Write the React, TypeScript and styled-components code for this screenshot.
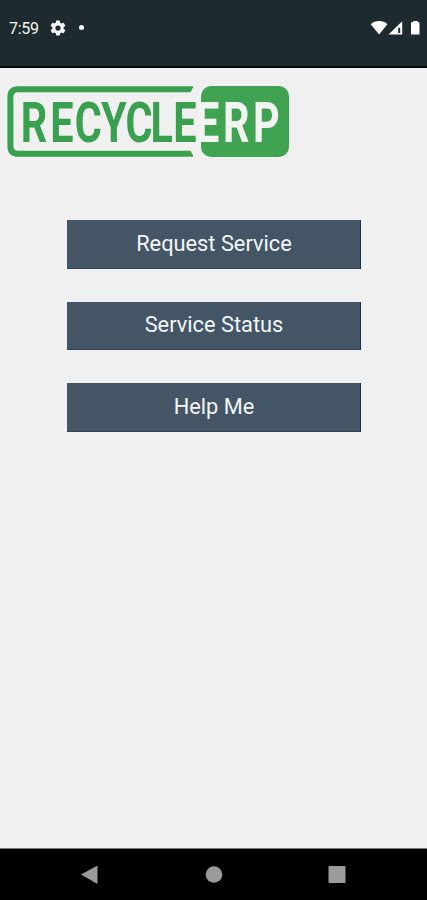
import React from "react";
import styled, { createGlobalStyle } from "styled-components";

const GlobalStyle = createGlobalStyle`
  body { margin: 0; background: #f0f0f0; font-family: Roboto, "Liberation Sans", sans-serif; }
  * { box-sizing: border-box; }
`;

const Screen = styled.div`
  display: flex;
  flex-direction: column;
  width: 427px;
  height: 900px;
  overflow: hidden;
  background: #f0f0f0;
`;

const StatusBar = styled.header`
  display: flex;
  align-items: flex-start;
  justify-content: space-between;
  height: 68px;
  padding: 18px 7px 0 9px;
  background: #1f2a2f;
  border-bottom: 2px solid #050708;
  color: #f4f6f6;
`;

const StatusGroup = styled.div<{ $gap: number }>`
  display: flex;
  align-items: center;
  height: 19px;
  gap: ${(p) => p.$gap}px;
`;

const Clock = styled.span`
  width: 30px;
  padding-top: 1px;
  font-size: 16px;
  line-height: 19px;
  letter-spacing: -0.3px;
  white-space: nowrap;
`;

const Dot = styled.span`
  width: 5px;
  height: 5px;
  margin-left: 2px;
  border-radius: 50%;
  background: #f4f6f6;
`;

const Content = styled.main`
  display: flex;
  flex: 1;
  flex-direction: column;
  align-items: flex-start;
  padding-top: 16px;
`;

const Logo = styled.svg`
  display: block;
  margin-left: 4px;
`;

const Wordmark = styled.text`
  font-family: Roboto, "Liberation Sans", sans-serif;
  font-size: 56px;
  font-weight: 700;
`;

const Menu = styled.nav`
  display: flex;
  flex-direction: column;
  gap: 33px;
  width: 294px;
  margin: 58px 0 0 67px;
`;

const MenuButton = styled.button`
  height: 48.5px;
  padding: 0 0 1px;
  border: 0;
  background: #445566;
  box-shadow: inset -1px 0 #183449, inset 0 -1px #2d4557;
  color: #f2f5fa;
  font-family: inherit;
  font-size: 21.8px;
  line-height: 26px;
`;

const NavigationBar = styled.footer`
  display: flex;
  align-items: flex-start;
  height: 52px;
  padding: 16px 0 0 80px;
  gap: 105px;
  background: #000;
  border-top: 1px solid #777;
`;

const NavIcon = styled.svg`
  display: block;
  flex: none;
`;

function GearIcon() {
  return (
    <svg width="18" height="18" viewBox="0 0 24 24">
      <path fill="#f4f6f6" fillRule="evenodd" d="M19.4 13a7.8 7.8 0 0 0 0-2l2.1-1.6c.2-.2.2-.4.1-.7l-2-3.4c-.1-.3-.4-.3-.6-.2l-2.5 1a7 7 0 0 0-1.7-1l-.4-2.6a.5.5 0 0 0-.5-.4h-4c-.3 0-.5.2-.5.4L9 5.1a8 8 0 0 0-1.7 1l-2.5-1c-.2-.1-.5 0-.6.2l-2 3.4c-.1.3-.1.5.1.7L4.500 11a7.800 7.800 0 0 0 0 2l-2.100 1.600c-.2.2-.2.4-.1.7l2 3.400c.1.3.4.3.6.2l2.500-1a7 7 0 0 0 1.700 1l.4 2.600c0 .2.2.4.500.4h4c.3 0 .5-.2.5-.4l.4-2.600a8 8 0 0 0 1.700-1l2.500 1c.2.1.5 0 .6-.2l2-3.400c.1-.3.1-.5-.1-.7zM12 15.500a3.500 3.500 0 1 1 0-7 3.500 3.500 0 0 1 0 7z" />
    </svg>
  );
}

function ConnectivityIcons() {
  return (
    <svg width="50" height="16" viewBox="0 0 50 16" fill="#fff">
      <path d="M0.700 4.300C5-.1 13.500-.1 17.400 4.300L9.100 14.400Z" />
      <path fillRule="evenodd" d="M18.500 14.500L32.200 1.200V14.500ZM28.200 7.700V13.100H30.200V7.700Z" />
      <path d="M41 2.300H43V1H48V2.300H49.500V14.500H41Z" />
    </svg>
  );
}

function RecycleErpLogo() {
  return (
    <Logo width="288" height="78" viewBox="4 84 288 78" role="img" aria-label="RECYCLEERP">
      <path
        d="M193 89.200H18Q10.400 89.200 10.400 97V146Q10.400 153.800 18 153.800H193"
        fill="none"
        stroke="#38a04f"
        strokeWidth="6"
      />
      <path fill="#f0f0f0" d="M194.500 85L190 93H196V85ZM190 150L194.500 158H198V150Z" />
      <Wordmark
        transform="translate(0 141.500) scale(.74 1)"
        x="28 68 101 136.500 169.500 203.500 234"
        fill="#38a04f"
      >
        RECYCLE
      </Wordmark>
      <rect x="201" y="86" width="88" height="71" rx="10" fill="#3fa352" />
      <path fill="#f0f0f0" d="M198 102H201V141.500H198Z" />
      <Wordmark
        transform="translate(0 141.500) scale(.74 1)"
        x="265 301.500 342"
        fill="#f2f4f1"
      >
        ERP
      </Wordmark>
    </Logo>
  );
}

export default function App() {
  return (
    <>
      <GlobalStyle />
      <Screen>
        <StatusBar>
          <StatusGroup $gap={10}>
            <Clock>7:59</Clock>
            <GearIcon />
            <Dot />
          </StatusGroup>
          <StatusGroup $gap={0}>
            <ConnectivityIcons />
          </StatusGroup>
        </StatusBar>
        <Content>
          <RecycleErpLogo />
          <Menu>
            <MenuButton>Request Service</MenuButton>
            <MenuButton>Service Status</MenuButton>
            <MenuButton>Help Me</MenuButton>
          </Menu>
        </Content>
        <NavigationBar>
          <NavIcon width="18" height="20" viewBox="0 0 18 20">
            <path d="M1 9.500L17.500.5V19Z" fill="#9b9b9b" />
          </NavIcon>
          <NavIcon width="20" height="20" viewBox="0 0 20 20">
            <circle cx="11" cy="9.500" r="8.300" fill="#9b9b9b" />
          </NavIcon>
          <NavIcon width="18" height="20" viewBox="0 0 18 20">
            <rect x="0.500" y="1" width="17" height="17" rx="1" fill="#9b9b9b" />
          </NavIcon>
        </NavigationBar>
      </Screen>
    </>
  );
}
